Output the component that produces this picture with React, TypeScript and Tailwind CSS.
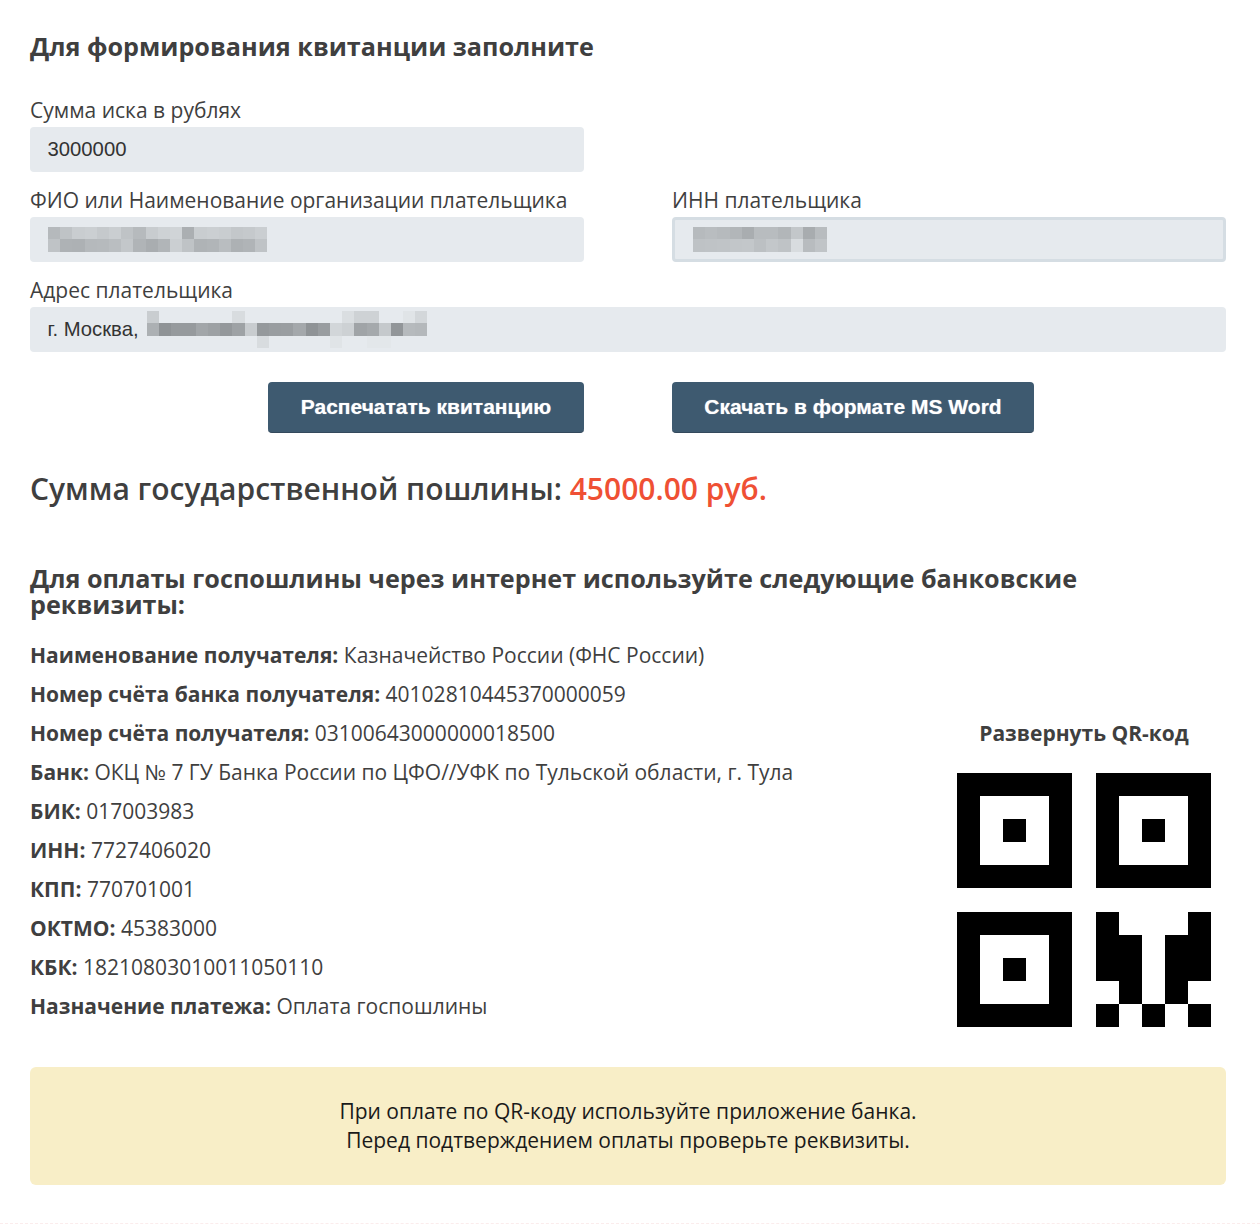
const openSans = "font-['Open_Sans',sans-serif]";

const details = [
  { label: "Наименование получателя:", value: "Казначейство России (ФНС России)" },
  { label: "Номер счёта банка получателя:", value: "40102810445370000059" },
  { label: "Номер счёта получателя:", value: "03100643000000018500" },
  { label: "Банк:", value: "ОКЦ № 7 ГУ Банка России по ЦФО//УФК по Тульской области, г. Тула" },
  { label: "БИК:", value: "017003983" },
  { label: "ИНН:", value: "7727406020" },
  { label: "КПП:", value: "770701001" },
  { label: "ОКТМО:", value: "45383000" },
  { label: "КБК:", value: "18210803010011050110" },
  { label: "Назначение платежа:", value: "Оплата госпошлины" },
];

// censored blocks from the reference, red channel of each cell (0 = no cell)
const nameBlur = [
  [0xb5, 0xbf, 0xc9, 0xcb, 0xc5, 0xca, 0xbf, 0xb6, 0xc8, 0xce, 0xd0, 0xab, 0xc9, 0xcb, 0xc9, 0xc3, 0xc5, 0xca],
  [0xbf, 0xae, 0xad, 0xb5, 0xb6, 0xba, 0xc3, 0xb0, 0xa9, 0xb1, 0xcb, 0xbf, 0xaf, 0xb1, 0xb9, 0xad, 0xb0, 0xbf],
];
const innBlur = [
  [0xb6, 0xb9, 0xb6, 0xb2, 0xa9, 0xb8, 0xb8, 0xb2, 0xc3, 0xa8, 0xb8],
  [0xbe, 0xbf, 0xc0, 0xc2, 0xc3, 0xbc, 0xc3, 0xbf, 0xd8, 0xb8, 0xc0],
];
const addressBlur = [
  [0xc9, 0, 0, 0, 0, 0, 0, 0xd8, 0, 0, 0, 0, 0, 0, 0, 0, 0xda, 0xce, 0xce, 0, 0, 0xe0, 0xd3],
  [0xac, 0x8f, 0x96, 0x96, 0xa2, 0x9d, 0x94, 0x9e, 0xc8, 0x95, 0x99, 0x9a, 0xa4, 0x8f, 0x99, 0xd2, 0xcd, 0xa0, 0xa5, 0xc5, 0x92, 0xb6, 0xb4],
  [0, 0, 0, 0, 0, 0, 0, 0, 0, 0xd8, 0, 0, 0, 0, 0, 0xe0, 0, 0, 0xe3, 0xe3, 0, 0, 0],
];

function Blur({ rows, className }: { rows: number[][]; className?: string }) {
  const cell = 12.2;
  const w = rows[0].length * cell;
  const h = rows.length * 12.3;
  return (
    <svg className={className} width={w} height={h} viewBox={`0 0 ${w} ${h}`} shapeRendering="crispEdges" aria-hidden="true">
      {rows.map((row, y) =>
        row.map((v, x) =>
          v ? <rect key={`${x}-${y}`} x={x * cell} y={y * 12.3} width={cell} height={12.3} fill={`rgb(${v},${v + 4},${v + 7})`} /> : null
        )
      )}
    </svg>
  );
}

function Field({ label, children, className }: { label: string; children?: React.ReactNode; className?: string }) {
  return (
    <div className="flex flex-col">
      <label className="h-[31px] text-[21px] leading-[29px] text-[#3f3f3f]">{label}</label>
      <div className={`flex h-[45px] items-center rounded-[4px] bg-[#e6eaee] font-['Liberation_Sans',sans-serif] text-[20.3px] text-[#333] ${className ?? "pl-[17.5px]"}`}>
        {children}
      </div>
    </div>
  );
}

function Finder({ x, y }: { x: number; y: number }) {
  return (
    <g>
      <rect x={x} y={y} width="5" height="1" />
      <rect x={x} y={y + 4} width="5" height="1" />
      <rect x={x} y={y} width="1" height="5" />
      <rect x={x + 4} y={y} width="1" height="5" />
      <rect x={x + 2} y={y + 2} width="1" height="1" />
    </g>
  );
}

function QrCode() {
  return (
    <svg width="254" height="254" viewBox="0 0 11 11" shapeRendering="crispEdges" fill="#000">
      <Finder x={0} y={0} />
      <Finder x={6} y={0} />
      <Finder x={0} y={6} />
      <path d="M6 6h1v1h1v3H7V9H6zM10 6h1v3h-1v1H9V7h1zM6 10h1v1H6zM8 10h1v1H8zM10 10h1v1h-1z" />
    </svg>
  );
}

export default function App() {
  return (
    <div className={`min-h-[1224px] w-[1260px] border-b border-dashed border-[#fbecec] bg-white pl-[30px] pr-[34px] pt-[28px] text-[#3f3f3f] ${openSans}`}>
      <h2 className="h-[36px] text-[25.2px] font-bold leading-[36px] text-[#3f3f3f]">Для формирования квитанции заполните</h2>

      <div className="mt-[32px] grid grid-cols-2 gap-x-[88px] gap-y-[14px]">
        <Field label="Сумма иска в рублях">3000000</Field>
        <div />
        <Field label="ФИО или Наименование организации плательщика">
          <Blur rows={nameBlur} />
        </Field>
        <Field label="ИНН плательщика" className="border-[3px] border-[#d5dde3] pl-[18px]">
          <Blur rows={innBlur} />
        </Field>
        <div className="col-span-2">
          <Field label="Адрес плательщика">
            <span>г. Москва,</span>
            <Blur rows={addressBlur} className="ml-[8px]" />
          </Field>
        </div>
      </div>

      <div className="mt-[30px] grid grid-cols-2 gap-x-[88px]">
        <div className="flex justify-end">
          <button className="h-[51px] w-[316px] rounded-[4px] border-b border-[#34495c] bg-[#3e5a70] font-['Liberation_Sans',sans-serif] text-[21px] font-bold text-white [text-shadow:0_0_1px_rgba(255,255,255,0.6)]">
            Распечатать квитанцию
          </button>
        </div>
        <div>
          <button className="h-[51px] w-[362px] rounded-[4px] border-b border-[#34495c] bg-[#3e5a70] font-['Liberation_Sans',sans-serif] text-[21px] font-bold text-white [text-shadow:0_0_1px_rgba(255,255,255,0.6)]">
            Скачать в формате MS Word
          </button>
        </div>
      </div>

      <p className="mt-[33px] text-[30px] font-semibold leading-[46px] text-[#3f3f3f]">
        Сумма государственной пошлины: <span className="text-[#ef5034]">45000.00 руб.</span>
      </p>

      <h3 className="mt-[53px] text-[25.2px] font-bold leading-[26px] text-[#3f3f3f]">
        Для оплаты госпошлины через интернет используйте следующие банковские реквизиты:
      </h3>

      <div className="mt-[19px] flex justify-between">
        <div className="flex flex-col text-[21px] leading-[39px] text-[#3f3f3f]">
          {details.map((d) => (
            <p key={d.label}>
              <span className="font-bold">{d.label}</span> {d.value}
            </p>
          ))}
        </div>
        <div className="mr-[15px] mt-[78px] flex w-[254px] flex-col items-center">
          <span className="h-[39px] text-[21px] font-bold leading-[39px] text-[#3f3f3f]">Развернуть QR-код</span>
          <div className="mt-[20px]">
            <QrCode />
          </div>
        </div>
      </div>

      <div className="mt-[40px] flex h-[118px] flex-col items-center justify-center rounded-[6px] bg-[#f8eec7] text-[21px] leading-[29px] text-[#1a1a1a]">
        <p>При оплате по QR-коду используйте приложение банка.</p>
        <p>Перед подтверждением оплаты проверьте реквизиты.</p>
      </div>
    </div>
  );
}
